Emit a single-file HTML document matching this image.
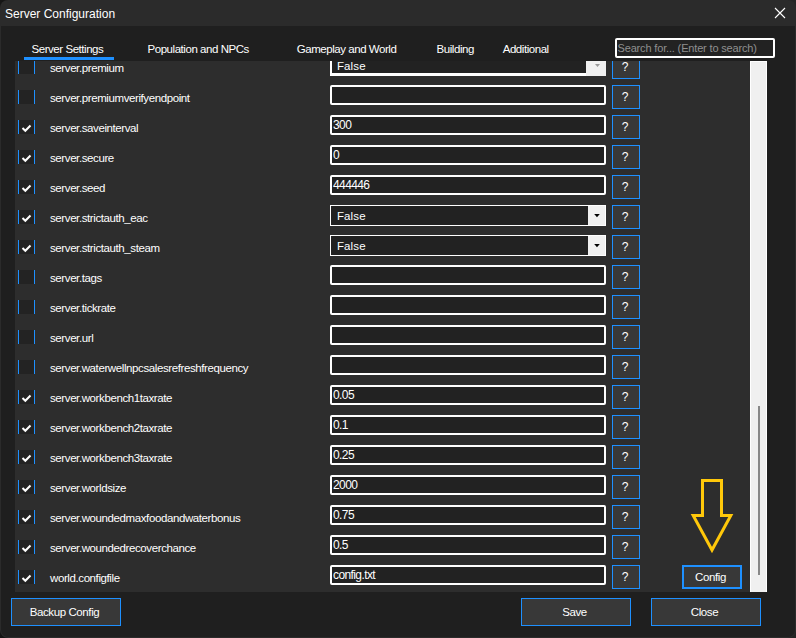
<!DOCTYPE html><html><head><meta charset="utf-8"><style>
*{box-sizing:border-box;margin:0;padding:0}
html,body{width:796px;height:638px;overflow:hidden;background:#1a1a1a;font-family:"Liberation Sans",sans-serif}
#win{position:absolute;left:0;top:0;width:796px;height:638px;background:#2b2b2b;border-radius:8px;overflow:hidden}
#title{position:absolute;left:5px;top:7px;font-size:12px;color:#fff;line-height:14px;white-space:nowrap}
#xbtn{position:absolute;left:772px;top:5px}
#content{position:absolute;left:1px;top:26px;width:794px;height:611px;background:#1f1f1f;border-radius:0 0 7px 7px}
.tab{position:absolute;top:41.6px;font-size:11.5px;letter-spacing:-0.45px;color:#fff;line-height:14px;white-space:nowrap}
#uline{position:absolute;left:24px;top:57px;width:90px;height:3px;background:#1e90ff}
#search{position:absolute;left:615px;top:38px;width:160px;height:20px;border:2px solid #fff;border-radius:2px;background:#222}
#search span{position:absolute;left:0.5px;top:0px;font-size:11px;letter-spacing:-0.16px;color:#8f8f8f;line-height:16px;white-space:nowrap}
#panel{position:absolute;left:15px;top:61px;width:735px;height:531px;background:#2d2d2d;overflow:hidden}
.cb{position:absolute;left:3px;width:17px;height:14px;background:#232323;border-left:1px solid #1e90ff;border-right:1px solid #1e90ff}
.ck{position:absolute;left:3px}
.lbl{position:absolute;left:35px;font-size:11.5px;letter-spacing:-0.4px;line-height:14px;color:#fff;white-space:nowrap}
.inp{position:absolute;left:315px;width:276px;height:20px;border:2px solid #fff;border-radius:2px;background:#222}
.inp span{position:absolute;left:1px;top:1.5px;font-size:12px;letter-spacing:-0.6px;line-height:13px;color:#fff;white-space:nowrap}
.cmb{position:absolute;left:315px;width:276px;height:21px;border:1px solid #fff;background:#222}
.cmb span{position:absolute;left:6px;top:3px;font-size:11.5px;letter-spacing:0.1px;line-height:14px;color:#fff}
.dd{position:absolute;left:257px;top:0;width:17px;height:19px;background:#f0f0f0}
.cmb0{position:absolute;left:315px;width:276px;height:21px;border:2px solid #fff;border-bottom-width:3px;background:#222}
.cmb0 span{position:absolute;left:5px;top:2px;font-size:11.5px;letter-spacing:0.1px;line-height:14px;color:#fff}
.dd0{position:absolute;left:254px;top:-2px;width:20px;height:21px;background:#f0f0f0}
.q{position:absolute;left:597px;width:28px;height:24px;border:1px solid #1e90ff;background:#383838;color:#fff;font-size:12px;text-align:center;line-height:22px;padding-right:2px}
#sb{position:absolute;left:750px;top:61px;width:17px;height:531px;background:#f0f0f0;border:1px solid #fff;border-bottom:none}
#thumb{position:absolute;left:758px;top:406px;width:2px;height:169px;background:#888}
.btn{position:absolute;height:28px;border:1px solid #1e90ff;background:#383838;color:#fff;font-size:11.5px;letter-spacing:-0.4px;text-align:center;line-height:26px;white-space:nowrap;padding-right:3px}
#cfg{position:absolute;left:682px;top:565px;width:60px;height:24px;border:2px solid #1e90ff;background:#383838;color:#fff;font-size:11.5px;letter-spacing:-0.4px;text-align:center;line-height:20px;padding-right:3px}
</style></head><body><div style="position:absolute;left:0;top:0;width:10px;height:10px;background:#161616"></div><div style="position:absolute;right:0;top:0;width:10px;height:10px;background:#262626"></div><div style="position:absolute;left:0;bottom:0;width:10px;height:10px;background:#141414"></div><div style="position:absolute;right:0;bottom:0;width:10px;height:10px;background:#242424"></div><div id="win"><div id="title">Server Configuration</div><svg id="xbtn" width="16" height="16" viewBox="0 0 16 16"><path d="M3 3L13 13M13 3L3 13" stroke="#fff" stroke-width="1.1"/></svg><div id="content"></div><div class="tab" style="left:31.499999999999996px">Server Settings</div><div class="tab" style="left:147.5px">Population and NPCs</div><div class="tab" style="left:296.7px">Gameplay and World</div><div class="tab" style="left:436.59999999999997px">Building</div><div class="tab" style="left:502.7px">Additional</div><div id="uline"></div><div id="search"><span>Search for... (Enter to search)</span></div><div id="panel"><div class="cb" style="top:-1px"></div>
<div class="lbl" style="top:-0.5px">server.premium</div>
<div class="cmb0" style="top:-6px"><span>False</span><div class="dd0"><svg width="20" height="18"><polygon points="9,9 14,9 11.5,12" fill="#999"/></svg></div></div>
<div class="q" style="top:-6px">?</div><div class="cb" style="top:29px"></div>
<div class="lbl" style="top:29.5px">server.premiumverifyendpoint</div>
<div class="inp" style="top:24px"><span></span></div>
<div class="q" style="top:24px">?</div><div class="cb" style="top:59px"></div>
<svg class="ck" style="top:59px" width="17" height="14" viewBox="0 0 17 14"><polyline points="4.5,8 7.3,10.8 12.5,5.5" fill="none" stroke="#fff" stroke-width="2"/></svg>
<div class="lbl" style="top:59.5px">server.saveinterval</div>
<div class="inp" style="top:54px"><span>300</span></div>
<div class="q" style="top:54px">?</div><div class="cb" style="top:89px"></div>
<svg class="ck" style="top:89px" width="17" height="14" viewBox="0 0 17 14"><polyline points="4.5,8 7.3,10.8 12.5,5.5" fill="none" stroke="#fff" stroke-width="2"/></svg>
<div class="lbl" style="top:89.5px">server.secure</div>
<div class="inp" style="top:84px"><span>0</span></div>
<div class="q" style="top:84px">?</div><div class="cb" style="top:119px"></div>
<svg class="ck" style="top:119px" width="17" height="14" viewBox="0 0 17 14"><polyline points="4.5,8 7.3,10.8 12.5,5.5" fill="none" stroke="#fff" stroke-width="2"/></svg>
<div class="lbl" style="top:119.5px">server.seed</div>
<div class="inp" style="top:114px"><span>444446</span></div>
<div class="q" style="top:114px">?</div><div class="cb" style="top:149px"></div>
<svg class="ck" style="top:149px" width="17" height="14" viewBox="0 0 17 14"><polyline points="4.5,8 7.3,10.8 12.5,5.5" fill="none" stroke="#fff" stroke-width="2"/></svg>
<div class="lbl" style="top:149.5px">server.strictauth_eac</div>
<div class="cmb" style="top:144px"><span>False</span><div class="dd"><svg width="17" height="19"><polygon points="6.2,8 11.8,8 9,11.2" fill="#000"/></svg></div></div>
<div class="q" style="top:144px">?</div><div class="cb" style="top:179px"></div>
<svg class="ck" style="top:179px" width="17" height="14" viewBox="0 0 17 14"><polyline points="4.5,8 7.3,10.8 12.5,5.5" fill="none" stroke="#fff" stroke-width="2"/></svg>
<div class="lbl" style="top:179.5px">server.strictauth_steam</div>
<div class="cmb" style="top:174px"><span>False</span><div class="dd"><svg width="17" height="19"><polygon points="6.2,8 11.8,8 9,11.2" fill="#000"/></svg></div></div>
<div class="q" style="top:174px">?</div><div class="cb" style="top:209px"></div>
<div class="lbl" style="top:209.5px">server.tags</div>
<div class="inp" style="top:204px"><span></span></div>
<div class="q" style="top:204px">?</div><div class="cb" style="top:239px"></div>
<div class="lbl" style="top:239.5px">server.tickrate</div>
<div class="inp" style="top:234px"><span></span></div>
<div class="q" style="top:234px">?</div><div class="cb" style="top:269px"></div>
<div class="lbl" style="top:269.5px">server.url</div>
<div class="inp" style="top:264px"><span></span></div>
<div class="q" style="top:264px">?</div><div class="cb" style="top:299px"></div>
<div class="lbl" style="top:299.5px">server.waterwellnpcsalesrefreshfrequency</div>
<div class="inp" style="top:294px"><span></span></div>
<div class="q" style="top:294px">?</div><div class="cb" style="top:329px"></div>
<svg class="ck" style="top:329px" width="17" height="14" viewBox="0 0 17 14"><polyline points="4.5,8 7.3,10.8 12.5,5.5" fill="none" stroke="#fff" stroke-width="2"/></svg>
<div class="lbl" style="top:329.5px">server.workbench1taxrate</div>
<div class="inp" style="top:324px"><span>0.05</span></div>
<div class="q" style="top:324px">?</div><div class="cb" style="top:359px"></div>
<svg class="ck" style="top:359px" width="17" height="14" viewBox="0 0 17 14"><polyline points="4.5,8 7.3,10.8 12.5,5.5" fill="none" stroke="#fff" stroke-width="2"/></svg>
<div class="lbl" style="top:359.5px">server.workbench2taxrate</div>
<div class="inp" style="top:354px"><span>0.1</span></div>
<div class="q" style="top:354px">?</div><div class="cb" style="top:389px"></div>
<svg class="ck" style="top:389px" width="17" height="14" viewBox="0 0 17 14"><polyline points="4.5,8 7.3,10.8 12.5,5.5" fill="none" stroke="#fff" stroke-width="2"/></svg>
<div class="lbl" style="top:389.5px">server.workbench3taxrate</div>
<div class="inp" style="top:384px"><span>0.25</span></div>
<div class="q" style="top:384px">?</div><div class="cb" style="top:419px"></div>
<svg class="ck" style="top:419px" width="17" height="14" viewBox="0 0 17 14"><polyline points="4.5,8 7.3,10.8 12.5,5.5" fill="none" stroke="#fff" stroke-width="2"/></svg>
<div class="lbl" style="top:419.5px">server.worldsize</div>
<div class="inp" style="top:414px"><span>2000</span></div>
<div class="q" style="top:414px">?</div><div class="cb" style="top:449px"></div>
<svg class="ck" style="top:449px" width="17" height="14" viewBox="0 0 17 14"><polyline points="4.5,8 7.3,10.8 12.5,5.5" fill="none" stroke="#fff" stroke-width="2"/></svg>
<div class="lbl" style="top:449.5px">server.woundedmaxfoodandwaterbonus</div>
<div class="inp" style="top:444px"><span>0.75</span></div>
<div class="q" style="top:444px">?</div><div class="cb" style="top:479px"></div>
<svg class="ck" style="top:479px" width="17" height="14" viewBox="0 0 17 14"><polyline points="4.5,8 7.3,10.8 12.5,5.5" fill="none" stroke="#fff" stroke-width="2"/></svg>
<div class="lbl" style="top:479.5px">server.woundedrecoverchance</div>
<div class="inp" style="top:474px"><span>0.5</span></div>
<div class="q" style="top:474px">?</div><div class="cb" style="top:509px"></div>
<svg class="ck" style="top:509px" width="17" height="14" viewBox="0 0 17 14"><polyline points="4.5,8 7.3,10.8 12.5,5.5" fill="none" stroke="#fff" stroke-width="2"/></svg>
<div class="lbl" style="top:509.5px">world.configfile</div>
<div class="inp" style="top:504px"><span>config.txt</span></div>
<div class="q" style="top:504px">?</div></div><div id="sb"></div><div id="thumb"></div><div id="cfg">Config</div><svg style="position:absolute;left:0;top:0" width="796" height="638"><path d="M702.5,515.4 V480.5 H721.5 V515.4 H730.8 L712,550 L693.2,515.4 Z" fill="none" stroke="#ffc80a" stroke-width="3" stroke-linejoin="miter"/></svg><div class="btn" style="left:11px;top:598px;width:110px">Backup Config</div><div class="btn" style="left:521px;top:598px;width:110px">Save</div><div class="btn" style="left:651px;top:598px;width:110px">Close</div></div></body></html>
